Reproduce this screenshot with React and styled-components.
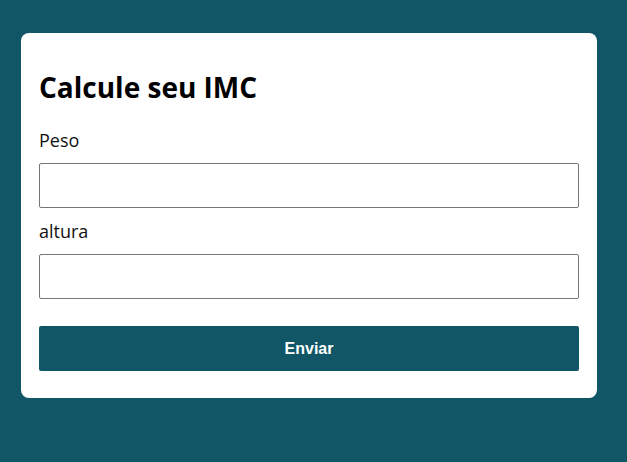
import styled, { createGlobalStyle } from "styled-components"

const GlobalStyle = createGlobalStyle`
    html, body {
        margin: 0;
        background: #105666;
        min-height: 100%;
    }
    * {
        box-sizing: border-box;
    }
`

const Page = styled.div`
    min-height: 462px;
    padding: 33px 30px 0 21px;
    font-family: "Open Sans", sans-serif;
`

const Card = styled.form`
    background: #fff;
    border-radius: 8px;
    padding: 18px 18px 27px;
    display: flex;
    flex-direction: column;
`

const Title = styled.h1`
    font-size: 28px;
    font-weight: 700;
    color: #000;
    margin: 17px 0 22px;
`

const Label = styled.label`
    font-size: 18px;
    color: #111;
    margin-bottom: 11px;
`

const Input = styled.input`
    height: 45px;
    width: 100%;
    border: 1px solid #767676;
    border-radius: 2px;
    margin: 0 0 11px;
    padding: 0 8px;
    font-size: 16px;
`

const Button = styled.button`
    margin-top: 16px;
    height: 45px;
    width: 100%;
    border: none;
    border-radius: 2px;
    background: #105666;
    color: #fff;
    font-family: "Liberation Sans", Arial, sans-serif;
    font-weight: 700;
    font-size: 16px;
`

export default function App() {
    return (
        <Page>
            <GlobalStyle />
            <Card onSubmit={e => e.preventDefault()}>
                <Title>Calcule seu IMC</Title>
                <Label htmlFor="peso">Peso</Label>
                <Input id="peso" type="text" />
                <Label htmlFor="altura">altura</Label>
                <Input id="altura" type="text" />
                <Button type="submit">Enviar</Button>
            </Card>
        </Page>
    )
}
